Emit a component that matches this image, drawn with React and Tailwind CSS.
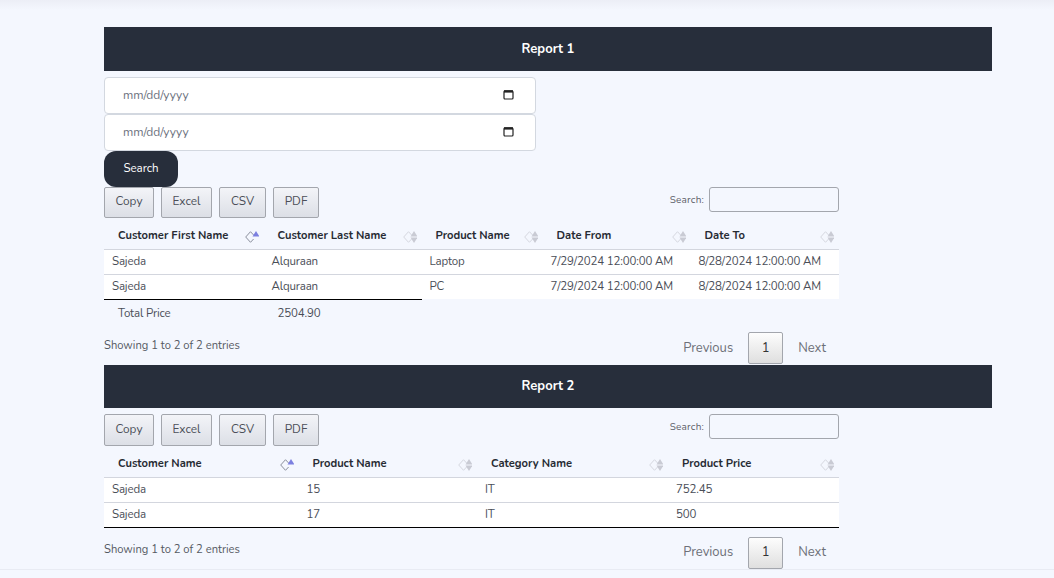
import React from "react";

const FONT = { fontFamily: '"Nunito", "Lato", "Noto Sans", sans-serif' };

function SortIcon({ active }) {
  const diamond = active ? "#8a8f9c" : "#d5d7df";
  return (
    <svg width="14" height="12" viewBox="0 0 14 12" className="shrink-0">
      <path d="M5.5 0.7 L0.7 6 L5.5 11.3 L8.6 8 M8.6 4 L5.5 0.7" fill="none" stroke={diamond} strokeWidth="1" />
      <path d="M11 0 L14.5 5.5 L7.5 5.5 Z" fill={active ? "#7c80e0" : "#c9cbd4"} />
      {!active && <path d="M11 12 L14.5 6.5 L7.5 6.5 Z" fill="#c9cbd4" />}
    </svg>
  );
}

function Bar({ children, h }) {
  return (
    <div className={`${h} bg-[#272e3b] flex items-center justify-center pt-[1px] text-white text-[13px] font-bold`}>
      {children}
    </div>
  );
}

function DateInput() {
  return (
    <div className="h-[37px] w-[432px] bg-white border border-[#d3d8e0] rounded-[4px] flex items-center justify-between pl-[18px] pr-[21px] pb-[2px] text-[#6d7280] text-[12px]">
      <span>mm/dd/yyyy</span>
      <svg width="11" height="11" viewBox="0 0 11 11">
        <rect x="1" y="2" width="9" height="8" rx="1" fill="none" stroke="#222" strokeWidth="1.2" />
        <rect x="1" y="1.2" width="9" height="2.4" fill="#222" />
      </svg>
    </div>
  );
}

function Toolbar({ h }) {
  const items = [["Copy", "w-[50px]"], ["Excel", "w-[51px]"], ["CSV", "w-[47px]"], ["PDF", "w-[46px]"]];
  return (
    <div className={`${h} w-[735px] flex justify-between`}>
      <div className="flex gap-[7px]">
        {items.map(([t, w]) => (
          <button key={t} className={`${w} ${h} pb-[1px] border border-[#a3a6ad] rounded-[2px] bg-gradient-to-b from-[#f3f4f8] to-[#dcdfe6] text-[#4b4f58] text-[11.8px]`}>
            {t}
          </button>
        ))}
      </div>
      <div className="flex items-start">
        <span className="text-[10px] text-[#5c6069] mt-[6px] mr-[5px] tracking-[0.2px]">Search:</span>
        <div className="w-[130px] h-[25px] border border-[#a3a6ad] rounded-[3px]"></div>
      </div>
    </div>
  );
}

function DataTable({ columns, rows, footer }) {
  return (
    <table className="w-[735px] table-fixed border-collapse text-[11.5px] tracking-[-0.15px]">
      <colgroup>
        {columns.map((c) => (
          <col key={c.label} style={{ width: c.width }} />
        ))}
      </colgroup>
      <thead>
        <tr className="h-[31px] border-b border-[#d3d6de]">
          {columns.map((c, i) => (
            <th key={c.label} className="pl-[14px] pr-[5px] pt-[7px] text-left font-bold text-[#272b33] text-[11.2px] tracking-normal">
              <div className="flex items-center justify-between">
                <span>{c.label}</span>
                <SortIcon active={i === 0} />
              </div>
            </th>
          ))}
        </tr>
      </thead>
      <tbody className="bg-white text-[#4a4e57]">
        {rows.map((r, i) => (
          <tr key={i} className={`h-[25px] ${i === rows.length - 1 ? (footer ? "" : "border-b border-black") : "border-b border-[#d3d6de]"}`}>
            {r.map((v, j) => (
              <td key={j} className="pl-[8px]">{v}</td>
            ))}
          </tr>
        ))}
      </tbody>
      {footer && (
        <tfoot>
          <tr className="h-[28px] text-[#4a4e57]">
            {footer.map((v, j) => (
              <td key={j} className="pl-[14px] border-t border-black">{v}</td>
            ))}
            <td colSpan={columns.length - footer.length}></td>
          </tr>
        </tfoot>
      )}
    </table>
  );
}

function Info({ infoClass, pagerClass }) {
  return (
    <div className="w-[735px] flex justify-between items-start">
      <div className={`${infoClass} text-[#555962] text-[11.2px]`}>Showing 1 to 2 of 2 entries</div>
      <div className={`${pagerClass} flex items-center text-[13px] text-[#6d7078] pr-[13px]`}>
        <span className="mr-[15px] pt-[1px]">Previous</span>
        <span className="w-[35px] h-[32px] pt-[1px] border border-[#a3a6ad] rounded-[2px] bg-gradient-to-b from-[#fdfdfd] to-[#dfdfdf] text-[#333] flex items-center justify-center">1</span>
        <span className="ml-[15px] pt-[1px]">Next</span>
      </div>
    </div>
  );
}

export default function App() {
  return (
    <div style={FONT} className="h-screen overflow-hidden bg-[#f4f7fe] flex flex-col">
      <div className="h-[10px] shrink-0 bg-gradient-to-b from-[#eceef6] to-[#f4f7fe]"></div>
      <div className="pl-[104px] pr-[62px] pt-[17px] flex-1 flex flex-col">
        <Bar h="h-[44px]">Report 1</Bar>
        <div className="mt-[6px]">
          <DateInput />
          <DateInput />
        </div>
        <button className="w-[74px] h-[36px] pb-[1px] rounded-[12px] bg-[#272e3b] text-white text-[11.5px]">Search</button>
        <Toolbar h="h-[31px]" />
        <DataTable
          columns={[
            { label: "Customer First Name", width: 159.5 },
            { label: "Customer Last Name", width: 158 },
            { label: "Product Name", width: 121 },
            { label: "Date From", width: 148 },
            { label: "Date To", width: 148.5 },
          ]}
          rows={[
            ["Sajeda", "Alquraan", "Laptop", "7/29/2024 12:00:00 AM", "8/28/2024 12:00:00 AM"],
            ["Sajeda", "Alquraan", "PC", "7/29/2024 12:00:00 AM", "8/28/2024 12:00:00 AM"],
          ]}
          footer={["Total Price", "2504.90"]}
        />
        <Info infoClass="mt-[11px]" pagerClass="mt-[5px]" />
        <div className="mt-[1px]"><Bar h="h-[43px]">Report 2</Bar></div>
        <div className="mt-[6px]"><Toolbar h="h-[32px]" /></div>
        <DataTable
          columns={[
            { label: "Customer Name", width: 194.5 },
            { label: "Product Name", width: 178.5 },
            { label: "Category Name", width: 191 },
            { label: "Product Price", width: 171 },
          ]}
          rows={[
            ["Sajeda", "15", "IT", "752.45"],
            ["Sajeda", "17", "IT", "500"],
          ]}
        />
        <Info infoClass="mt-[14px]" pagerClass="mt-[9px]" />
      </div>
      <div className="h-[10px] shrink-0 border-t border-[#e8ebf3]"></div>
    </div>
  );
}
